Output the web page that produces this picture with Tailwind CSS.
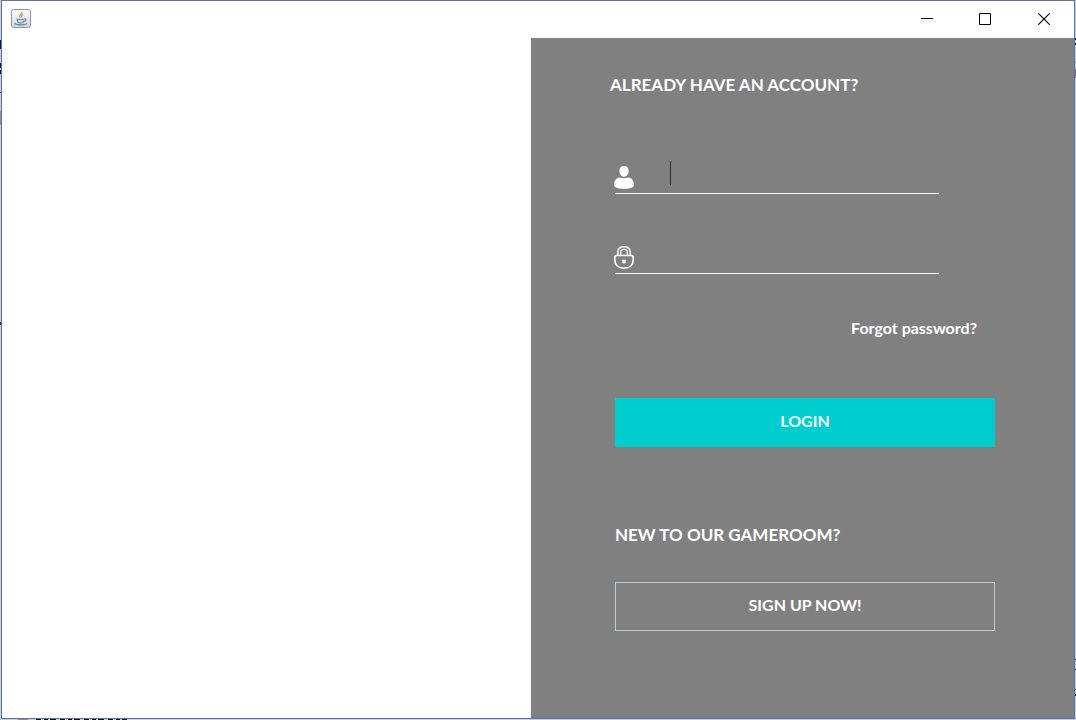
<!DOCTYPE html>
<html lang="en">
<head>
<meta charset="utf-8">
<title>Gameroom login</title>
<script src="https://cdn.jsdelivr.net/npm/@tailwindcss/browser@4"></script>
</head>
<body class="relative flex min-h-screen flex-col bg-[#c3cdf0] px-px pb-px font-['Lato','Open_Sans',sans-serif] font-bold text-white">
<!-- Slivers of the desktop that show past the window's edges -->
<svg class="absolute top-0 left-0 h-[720px] w-px" viewBox="0 0 1 720" aria-hidden="true"><path d="M.5 40v9M.5 63v5M.5 70v4M.5 92v1M.5 322v3" stroke="#15154a"/><path d="M.5 111v14" stroke="#8c90a0"/></svg>
<svg class="absolute top-0 right-0 h-[720px] w-px" viewBox="0 0 1 720" aria-hidden="true"><path d="M.5 38v2M.5 43v2M.5 659v1M.5 669v1M.5 689v1M.5 694v2" stroke="#15154a"/><path d="M.5 62v1M.5 69v9" stroke="#986a9c"/></svg>
<svg class="absolute bottom-0 left-0 h-px w-[130px]" viewBox="0 0 130 1" aria-hidden="true"><path d="M18 .5h10" stroke="#9b8a7c"/><path d="M36 .5h91" stroke="#101018" stroke-dasharray="5 3 4 2 6 4"/></svg>
<div class="flex grow flex-col border border-[#60709c] bg-white">
  <header class="flex h-[37px] shrink-0 items-center justify-between bg-white pb-px pl-[9px]">
    <svg class="size-5" viewBox="0 0 20 20" fill="none" aria-hidden="true">
      <defs><linearGradient id="tile" x1="0" y1="0" x2="0" y2="1"><stop stop-color="#fff"/><stop offset="1" stop-color="#cbd5de"/></linearGradient></defs>
      <rect x=".5" y=".5" width="19" height="18" rx="2" fill="url(#tile)" stroke="#8798a8"/>
      <path d="M10.8 3c.8 2-3 2.600-2.200 4.400.2.600.8 1 1 1.500M12.300 5.200c-2.400 1-1.800 2-1.200 3" stroke="#d9a273" stroke-width="1.500"/>
      <path d="M5.500 10c2 .8 6 .7 8 0M6.500 10.500c0 3 .5 3.500 3.300 3.500 2 0 2.700-.8 3.200-2M13.300 10c2.500-.7 2 2-.4 2.300M4.500 14c-1.500 1 1 1.800 5 1.800s6-.6 6-1.500" stroke="#6683a0" stroke-width="1.200"/>
    </svg>
    <div class="flex h-full text-black">
      <button type="button" aria-label="Minimize" class="flex w-[58px] items-center justify-center"><svg class="h-3 w-3" viewBox="0 0 12 12"><path d="M0 5.500h12" stroke="currentColor"/></svg></button>
      <button type="button" aria-label="Maximize" class="flex w-[58px] items-center justify-center"><svg class="h-3 w-3" viewBox="0 0 12 12"><path d="M.5.500h11v11H.500z" fill="none" stroke="currentColor"/></svg></button>
      <button type="button" aria-label="Close" class="flex w-[60px] items-center justify-center"><svg class="h-3 w-3" viewBox="0 0 12 12"><path d="M.2.200l11.600 11.600M11.800.200.200 11.800" stroke="currentColor" stroke-width="1.100"/></svg></button>
    </div>
  </header>
  <main class="flex grow">
    <section class="grow bg-white"></section>
    <section class="w-[543px] bg-[#808080] px-[79px] pt-[35px] pb-20">
      <h1 class="text-[17px] leading-6">ALREADY HAVE AN ACCOUNT?</h1>
      <form class="mt-[61px] flex flex-col pl-[5px]">
        <label class="flex h-9 w-[324px] items-end border-b border-[#f4f7ff] pb-1">
          <svg class="-ml-px h-6 w-5 shrink-0" viewBox="0 0 20 24" fill="#fff" aria-hidden="true"><path d="M10 1c3 0 4.600 1.800 4.600 5S12.700 11.800 10 11.800 5.400 9.200 5.400 6 7 1 10 1zM5 12.500c2.800 1 7.200 1 10 0 3.300.8 5 3.800 5 7.300 0 2.200-2.200 4-10 4s-10-1.800-10-4c0-3.500 1.700-6.500 5-7.300z"/></svg>
          <span class="mb-1 ml-9 h-6 w-px shrink-0 bg-[#303030]"></span>
          <input type="text" aria-label="Username" class="h-6 min-w-0 grow bg-transparent outline-none">
        </label>
        <label class="mt-11 flex h-9 w-[324px] items-end border-b border-[#f4f7ff] pb-1">
          <svg class="-ml-px h-6 w-5 shrink-0" viewBox="0 0 20 24" fill="none" stroke="#fff" aria-hidden="true"><path d="M3.800 10V7C3.800 3.500 6.300 1.700 10 1.700S16.200 3.500 16.200 7v3" stroke-width="1.500"/><path d="M6.700 10V7.200C6.700 5.300 8 4.300 10 4.300s3.300 1 3.300 2.900V10" stroke-width="1.300"/><path d="M3 10.500h14c1.500 0 2.200.8 2.200 2V15c0 5-3.700 8.200-9.200 8.200S.8 20 .8 15v-2.500c0-1.200.7-2 2.200-2z" stroke-width="1.600"/><path d="M8.300 14.800h3.400v2.400L10 19l-1.700-1.800z" fill="#fff" stroke="none"/></svg>
          <input type="password" aria-label="Password" class="ml-9 h-6 min-w-0 grow bg-transparent outline-none">
        </label>
        <a href="#" class="mt-[42px] mr-[18px] self-end text-[16px] leading-6">Forgot password?</a>
        <button type="submit" class="mt-[58px] h-[49px] bg-[#00cdcd] pb-1 text-[16px] leading-6 text-[#f0ffff]">LOGIN</button>
        <h2 class="mt-[76px] text-[17px] leading-6">NEW TO OUR GAMEROOM?</h2>
        <button type="button" class="mt-[35px] h-[49px] border border-[#b9cbdc] pb-1 text-[16px] leading-6">SIGN UP NOW!</button>
      </form>
    </section>
  </main>
</div>
</body>
</html>
